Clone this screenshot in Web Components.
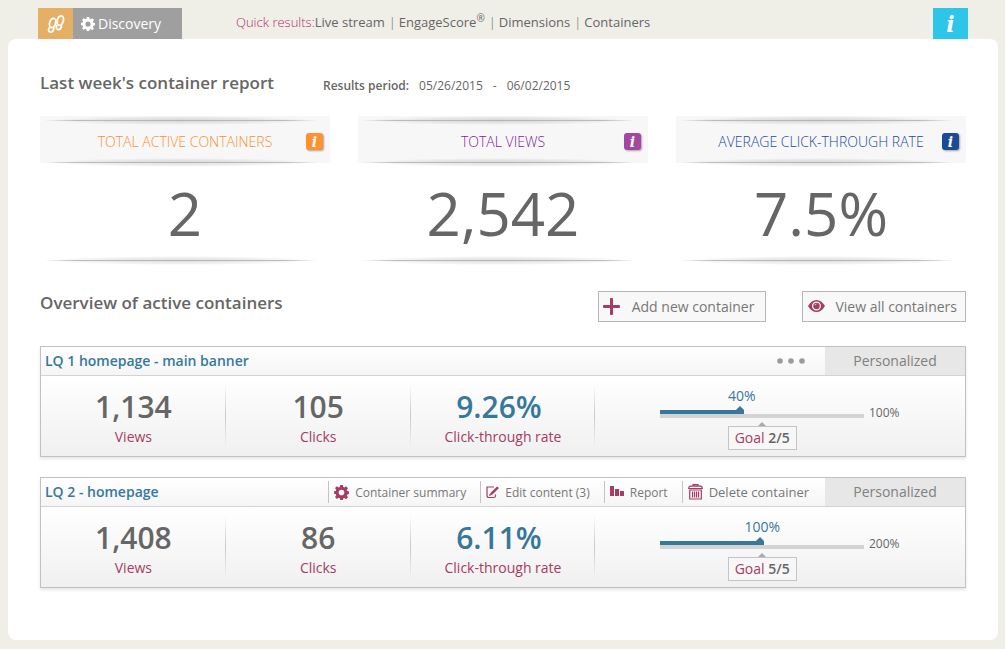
<!DOCTYPE html>
<html lang="en">
<head>
<meta charset="utf-8">
<title>Discovery - container report</title>
<style>
  html { background: #efeee7; }
  body { margin: 0; padding: 8px 7px 9px 8px; font-family: "Open Sans", sans-serif; font-size: 14px; color: #666; }
</style>
</head>
<body>
<report-page></report-page>

<script>
const ICONS = {
  gear: `<svg viewBox="0 0 16 16" fill="currentColor"><path fill-rule="evenodd" d="M6.6 0h2.8l.4 2.1 1.3.6L12.9 1.400l2 2-1.300 1.800.6 1.300 2 .400v2.600l-2 .500-.6 1.300 1.300 1.800-2 2-1.800-1.300-1.300.6L9.400 16H6.600l-.4-1.900-1.300-.6-1.800 1.300-2-2 1.300-1.800-.6-1.300L0 9.300V6.700l1.800-.3.6-1.300L1.100 3.300l2-2 1.800 1.300 1.300-.6zM8 5a3 3 0 100 6 3 3 0 000-6z"/></svg>`,
  steps: `<svg viewBox="0 0 18 18" fill="none" stroke="currentColor" stroke-width="1.800"><ellipse cx="5.600" cy="8" rx="3" ry="4.800" transform="rotate(16 5.600 8)"/><path d="M2.300 12.500Q.5 16.500 3.300 17T7 12.800"/><ellipse cx="13.300" cy="5.600" rx="3" ry="4.800" transform="rotate(16 13.300 5.600)"/><path d="M10 10Q8.200 14 11 14.500T14.700 10.300"/></svg>`,
  plus: `<svg viewBox="0 0 17 17" fill="currentColor"><path d="M7.700 0h1.600q.7 0 .7.700V7h6q1 0 1 1v1q0 1-1 1h-6v6.300q0 .7-.7.700H7.700q-.7 0-.7-.7V10H1q-1 0-1-1V8q0-1 1-1h6V.7Q7 0 7.700 0z"/></svg>`,
  eye: `<svg viewBox="0 0 17 14" fill="currentColor"><path fill-rule="evenodd" d="M0 6Q3.500 0 8.500 0T17 6Q13.500 12 8.500 12T0 6zM8.500 1.500a4.500 4.500 0 100 9 4.500 4.500 0 000-9z"/><circle cx="8.500" cy="6" r="3.200"/><path d="M7 5Q7.300 4 8.500 4" fill="none" stroke="#fff" stroke-width=".8"/></svg>`,
  edit: `<svg viewBox="0 0 13 13" fill="none" stroke="currentColor" stroke-width="1.200"><path d="M8 1H1v8.500Q1 11.500 3 11.500H7.500Q9.500 11.500 9.500 10V8.500"/><path d="M4 9.500L5 6.500 11 .5 13 2 7 8z" fill="currentColor" stroke="none"/><path d="M3.300 9.500L5.500 7.500"/></svg>`,
  bars: `<svg viewBox="0 0 14 13" fill="currentColor"><path d="M0 0h4v10H0zM5 3h4v7H5zM10 5h4v5h-4z"/></svg>`,
  bin: `<svg viewBox="0 0 15 16" fill="none" stroke="currentColor" stroke-width="1.200"><path d="M5 2V.6h5V2M.7 4.500Q.7 2.200 2.500 2.200h10q1.800 0 1.800 2.300zM1.700 6h11.600v9H1.700z"/><path d="M4.500 7.500v6M6.500 7.500v6M8.500 7.500v6M10.500 7.500v6"/></svg>`,
  dots: `<svg viewBox="0 0 28 6" fill="currentColor"><circle cx="3" cy="3" r="2.800"/><circle cx="14" cy="3" r="2.800"/><circle cx="25" cy="3" r="2.800"/></svg>`
};

const RESET = `
  *, *::before, *::after { box-sizing: border-box; }
  h1, h2, h3, p, ul { margin: 0; padding: 0; list-style: none; }
  button { font: inherit; color: inherit; background: none; border: 0; padding: 0; cursor: pointer; }
  a { color: inherit; text-decoration: none; }
`;

class Base extends HTMLElement {
  connectedCallback() {
    if (this.shadowRoot) return;
    this.attachShadow({ mode: 'open' }).innerHTML = `<style>${RESET}${this.css()}</style>${this.html()}`;
  }
  get(name) { return this.getAttribute(name) || ''; }
  css() { return ''; }
  html() { return '<slot></slot>'; }
}

/* <ui-icon name="gear" size="15"> */
customElements.define('ui-icon', class extends Base {
  css() { return `:host { display: block; flex: none; width: ${this.get('size') || 16}px; } svg { display: block; width: 100%; }`; }
  html() { return ICONS[this.get('name')]; }
});

/* Thin line that fades at both ends, with a soft shadow around it */
customElements.define('soft-rule', class extends Base {
  css() { return `
    :host { display: block; position: relative; height: 9px; margin: 0 13px 0 4px;
      background:
        linear-gradient(90deg, transparent, #bbb 12%, #b4b4b4 50%, #bbb 88%, transparent) center / 100% 1px no-repeat,
        radial-gradient(ellipse 48% 50% at center, rgba(0,0,0,.13), rgba(0,0,0,.07) 60%, transparent); }`; }
  html() { return ''; }
});

customElements.define('top-bar', class extends Base {
  css() { return `
    :host { display: flex; height: 31px; padding: 0 30px; align-items: stretch; }
    .logo { width: 35px; display: grid; place-items: center; background: #e5b066; color: #fff; }
    .current { width: 109px; display: flex; align-items: center; gap: 3px; padding-left: 8px; background: #9f9f9f; color: #fff; }
    nav { flex: 1; display: flex; padding-left: 54px; font-size: 13px; line-height: 28px; white-space: nowrap; }
    .lead { font-weight: 300; color: #b03070; }
    .sep { padding: 0 3px 0 4px; font-weight: 300; }
    sup { font-size: 10px; line-height: 0; vertical-align: 5px; }
    .help { width: 35px; background: #2dc5e8; color: #fff; font: italic bold 22px/30px "DejaVu Serif", serif; }`; }
  html() { return `
    <a class="logo" href="#" aria-label="Home"><ui-icon name="steps" size="18"></ui-icon></a>
    <a class="current" href="#"><ui-icon name="gear" size="14"></ui-icon>Discovery</a>
    <nav><span class="lead">Quick results:</span><a href="#">Live stream</a><span class="sep">|</span><a href="#">EngageScore<sup>®</sup></a><span class="sep">|</span><a href="#">Dimensions</a><span class="sep">|</span><a href="#">Containers</a></nav>
    <button class="help" aria-label="Help">i</button>`; }
});

customElements.define('total-card', class extends Base {
  css() { return `
    :host { display: block; }
    header { display: grid; grid-template-columns: 17px 1fr 17px; padding: 4px 7px 0; height: 47px; align-items: center; background: #f7f7f7; }
    h3 { grid-column: 2; text-align: center; font-size: 14px; font-weight: 300; color: var(--accent); white-space: nowrap; }
    .top { margin-bottom: -9px; }
    .mid { margin-top: -5px; }
    button { width: 17px; height: 17px; border-radius: 3px; background: var(--accent-fill); color: #fff; box-shadow: 1px 1px 2px #0005;
      font: italic bold 14px/16px "DejaVu Serif", serif; }
    p { height: 89px; text-align: center; font-size: 60px; line-height: 92px; }`; }
  html() { return `
    <soft-rule class="top"></soft-rule>
    <header><h3>${this.get('label')}</h3><button aria-label="About ${this.get('label').toLowerCase()}">i</button></header>
    <soft-rule class="mid"></soft-rule>
    <p>${this.get('value')}</p>
    <soft-rule></soft-rule>`; }
});

customElements.define('outline-button', class extends Base {
  css() { return `
    :host { display: block; }
    button { display: flex; align-items: center; height: 31px; padding: 0 11px 0 4px; border: 1px solid #b5b5b5; background: #f8f8f8; color: #777; white-space: nowrap; }
    ui-icon { color: #a63c63; margin-right: 12px; }
    :host([compact]) button { padding: 0 8px 0 5px; }
    :host([compact]) ui-icon { margin-right: 10px; }`; }
  html() { return `<button><ui-icon name="${this.get('icon')}" size="17"></ui-icon><slot></slot></button>`; }
});

customElements.define('action-button', class extends Base {
  css() { return `
    :host { display: block; }
    button { display: flex; align-items: center; gap: 6px; height: 22px; padding: 0 14px 0 5px; border-left: 1px solid #c4c4c4; color: #777; font-size: 12px; white-space: nowrap; }
    :host([large]) button { font-size: 13px; padding-right: 16px; }
    ui-icon { color: #a63c63; }`; }
  html() { return `<button><ui-icon name="${this.get('icon')}" size="${this.get('size')}"></ui-icon><slot></slot></button>`; }
});

customElements.define('goal-meter', class extends Base {
  css() {
    const at = +this.get('position');
    return `
    :host { display: grid; grid-template-columns: minmax(0, 1fr) 32px; column-gap: 5px; }
    .value { width: ${at * 2}%; text-align: center; line-height: 18px; color: #37789a; height: 19px; }
    .track { grid-column: 1; height: 12px; border-bottom: 4px solid #d3d3d3; }
    .fill { width: calc(${at}% + 2px); height: 8px; border-bottom: 4px solid #37789a; display: flex; justify-content: flex-end; }
    svg { display: block; }
    .max { font-size: 12px; line-height: 12px; height: 12px; padding-top: 1px; }
    .goal { grid-column: 1; display: flex; flex-direction: column; align-items: center; padding-top: 4px; color: #aaa; }
    .box { height: 24px; padding: 0 6px; border: 1px solid #c4c4c4; background: #f7f7f7; line-height: 22px; color: #666; white-space: nowrap; }
    .box span { color: #a63c63; } b { font-weight: 600; }`; }
  html() { return `
    <div class="value">${this.get('value')}</div>
    <div class="track" role="meter" aria-label="Progress" aria-valuemin="0" aria-valuemax="${parseInt(this.get('max'))}" aria-valuenow="${parseInt(this.get('value'))}">
      <div class="fill"><svg width="8" height="4" fill="#37789a"><path d="M0 4L4 0l4 4z"/></svg></div>
    </div>
    <span class="max">${this.get('max')}</span>
    <div class="goal"><svg width="8" height="4" fill="currentColor"><path d="M0 4L4 0l4 4z"/></svg>
      <div class="box"><span>Goal</span> <b>${this.get('goal')}</b></div></div>`; }
});

customElements.define('metric-value', class extends Base {
  css() { return `
    :host { display: block; position: relative; text-align: center; padding-top: 10px; }
    :host::after { content: ""; position: absolute; top: 8px; bottom: 8px; right: 0; width: 1px; background: linear-gradient(transparent, #c8c8c8 50%, transparent); }
    .n { font-size: 30px; font-weight: 600; line-height: 42px; }
    :host([accent]) .n { color: #37789a; padding-right: 8px; }
    .l { color: #a63c63; line-height: 18px; }`; }
  html() { return `<p class="n">${this.get('value')}</p><p class="l">${this.get('label')}</p>`; }
});

customElements.define('container-card', class extends Base {
  css() { return `
    :host { display: block; border: 1px solid #c1c1c1; box-shadow: 0 2px 3px #0000001a; }
    header { display: flex; align-items: center; height: 29px; border-bottom: 1px solid #d3d3d3; background: linear-gradient(#fff, #f5f5f5); }
    h3 { flex: 1; padding: 0 0 2px 4px; font-size: 14px; font-weight: 600; color: #37789a; }
    .tools { display: flex; align-items: center; }
    .tag { width: 140px; align-self: stretch; background: #e7e7e7; color: #808080; text-align: center; line-height: 28px; }
    .body { display: grid; grid-template-columns: repeat(3, 20%) 1fr; height: 80px; background: linear-gradient(#fff, #f0f0f0); }
    .meter { padding: 11px 64px 0 65px; }`; }
  html() { return `
    <header><h3>${this.get('name')}</h3><div class="tools"><slot name="tools"></slot></div><span class="tag">Personalized</span></header>
    <div class="body"><slot name="metric"></slot><div class="meter"><slot></slot></div></div>`; }
});

customElements.define('report-page', class extends Base {
  css() { return `
    :host { display: block; }
    main { background: #fff; border-radius: 8px; padding: 30px 32px 52px; }
    h1, h2 { font-size: 17px; font-weight: 600; line-height: 28px; white-space: nowrap; }
    .report { display: flex; align-items: center; height: 28px; }
    .period { display: flex; gap: 10px; margin-left: 49px; padding-top: 4px; font-size: 12px; }
    .period b { font-weight: 600; }
    .totals { display: grid; grid-template-columns: repeat(3, 1fr); gap: 28px; margin-top: 19px; }
    .overview { display: flex; align-items: center; gap: 36px; height: 31px; margin-top: 26px; }
    .overview h2 { flex: 1; padding-bottom: 8px; }
    .list { display: grid; gap: 20px; margin-top: 24px; }
    .more { display: block; margin-right: 20px; color: #9b9b9b; }`; }
  html() { return `
    <top-bar></top-bar>
    <main>
      <div class="report"><h1>Last week's container report</h1>
        <p class="period"><b>Results period:</b><span>05/26/2015</span><span>-</span><span>06/02/2015</span></p></div>
      <section class="totals">
        <total-card label="TOTAL ACTIVE CONTAINERS" value="2" style="--accent:#f7902f;--accent-fill:#ff922e"></total-card>
        <total-card label="TOTAL VIEWS" value="2,542" style="--accent:#7a1fa0;--accent-fill:#a347a3"></total-card>
        <total-card label="AVERAGE CLICK-THROUGH RATE" value="7.5%" style="--accent:#1a4a9c;--accent-fill:#1a4a98"></total-card>
      </section>
      <div class="overview"><h2>Overview of active containers</h2>
        <outline-button icon="plus">Add new container</outline-button>
        <outline-button icon="eye" compact>View all containers</outline-button></div>
      <section class="list">
        <container-card name="LQ 1 homepage - main banner">
          <button slot="tools" class="more" aria-label="More actions"><ui-icon name="dots" size="28"></ui-icon></button>
          <metric-value slot="metric" value="1,134" label="Views"></metric-value>
          <metric-value slot="metric" value="105" label="Clicks"></metric-value>
          <metric-value slot="metric" accent value="9.26%" label="Click-through rate"></metric-value>
          <goal-meter value="40%" position="40" max="100%" goal="2/5"></goal-meter>
        </container-card>
        <container-card name="LQ 2 - homepage">
          <action-button slot="tools" icon="gear" size="15">Container summary</action-button>
          <action-button slot="tools" icon="edit" size="13">Edit content (3)</action-button>
          <action-button slot="tools" icon="bars" size="14">Report</action-button>
          <action-button slot="tools" icon="bin" size="15" large>Delete container</action-button>
          <metric-value slot="metric" value="1,408" label="Views"></metric-value>
          <metric-value slot="metric" value="86" label="Clicks"></metric-value>
          <metric-value slot="metric" accent value="6.11%" label="Click-through rate"></metric-value>
          <goal-meter value="100%" position="50" max="200%" goal="5/5"></goal-meter>
        </container-card>
      </section>
    </main>`; }
});
</script>
</body>
</html>
